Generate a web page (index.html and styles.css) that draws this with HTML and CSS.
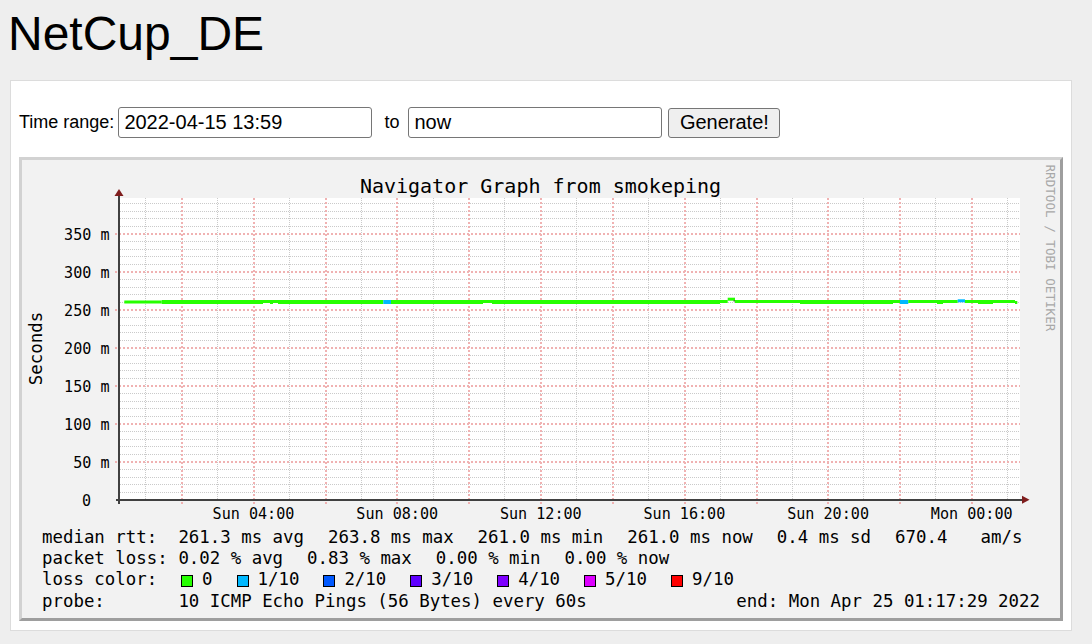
FILE: index.html
```html
<!DOCTYPE html>
<html lang="en">
<head>
<meta charset="utf-8">
<title>NetCup_DE</title>
<link rel="stylesheet" href="styles.css">
</head>
<body>
<h1 class="title">NetCup_DE</h1>
<div class="panel">
  <form class="range">
    <label class="range-label" for="start">Time range:</label>
    <input class="range-input" id="start" type="text" value="2022-04-15 13:59">
    <span class="range-to">to</span>
    <input class="range-input range-input-end" id="end" type="text" value="now">
    <button class="range-btn" type="button">Generate!</button>
  </form>
  <div class="graph">
    <svg class="graph-svg" width="1038" height="458" viewBox="3 3 1038 458" xmlns="http://www.w3.org/2000/svg">
      <rect class="g-back" x="0" y="0" width="1044" height="464"/>
      <rect class="g-canvas" x="101" y="41" width="900" height="301"/>
      <g class="g-grid">
        <path class="g-minor" d="M101 335.5H1001M101 327.5H1001M101 320.5H1001M101 312.5H1001M101 297.5H1001M101 289.5H1001M101 282.5H1001M101 274.5H1001M101 259.5H1001M101 251.5H1001M101 244.5H1001M101 236.5H1001M101 221.5H1001M101 213.5H1001M101 206.5H1001M101 198.5H1001M101 183.5H1001M101 175.5H1001M101 168.5H1001M101 160.5H1001M101 145.5H1001M101 137.5H1001M101 130.5H1001M101 122.5H1001M101 107.5H1001M101 99.5H1001M101 92.5H1001M101 84.5H1001M101 69.5H1001M101 61.5H1001M101 54.5H1001M101 46.5H1001"/>
        <path class="g-minor" d="M126.5 41V342M198.5 41V342M270.5 41V342M342.5 41V342M414.5 41V342M485.5 41V342M557.5 41V342M629.5 41V342M701.5 41V342M773.5 41V342M844.5 41V342M916.5 41V342M988.5 41V342"/>
        <path class="g-major" d="M96 305H1001M96 267H1001M96 229H1001M96 191H1001M96 153H1001M96 115H1001M96 77H1001"/>
        <path class="g-major" d="M163 41V347M235 41V347M307 41V347M378 41V347M450 41V347M522 41V347M594 41V347M666 41V347M738 41V347M809 41V347M881 41V347M953 41V347"/>
      </g>
      <g class="g-data">
        <rect class="g-c0" x="105.3" y="143.5" width="37.4" height="3"/>
        <rect class="g-c0" x="142.7" y="143" width="101.3" height="4"/>
        <rect class="g-c0" x="244" y="143" width="7" height="3"/>
        <rect class="g-c0" x="251" y="143" width="3" height="4"/>
        <rect class="g-c0" x="254" y="143" width="5" height="3"/>
        <rect class="g-c0" x="259" y="143" width="105.3" height="4"/>
        <rect class="g-c1" x="364.3" y="143" width="7.7" height="4"/>
        <rect class="g-c0" x="372" y="143" width="92" height="4"/>
        <rect class="g-c0" x="464" y="143" width="9" height="3"/>
        <rect class="g-c0" x="473" y="143" width="228" height="4"/>
        <rect class="g-c0" x="701" y="143" width="7.7" height="3"/>
        <rect class="g-c0" x="708.7" y="140.7" width="7.3" height="3"/>
        <rect class="g-dark" x="714.5" y="143.3" width="1.5" height="1.2"/>
        <rect class="g-c0" x="716" y="143" width="65" height="3"/>
        <rect class="g-c0" x="781" y="143" width="93" height="4"/>
        <rect class="g-c0" x="874" y="143" width="7" height="3"/>
        <rect class="g-c1" x="881" y="143" width="8.3" height="4"/>
        <rect class="g-c0" x="889.3" y="143" width="28.7" height="3"/>
        <rect class="g-c0" x="918" y="143" width="6" height="4"/>
        <rect class="g-c0" x="924" y="143" width="14.7" height="3"/>
        <rect class="g-c1" x="938.7" y="142.3" width="7.3" height="3"/>
        <rect class="g-c0" x="946" y="143" width="13" height="3"/>
        <rect class="g-c0" x="959" y="143" width="15" height="4"/>
        <rect class="g-c0" x="974" y="143" width="22" height="3"/>
        <rect class="g-c0" x="996" y="144" width="2.3" height="3"/>
      </g>
      <rect class="g-axis-line" x="99" y="38.5" width="2" height="308.5"/>
      <rect class="g-axis-line" x="97" y="342" width="906" height="2"/>
      <polygon class="g-arrow" points="95.5,39 104.5,39 100,32"/>
      <polygon class="g-arrow" points="1003,338.8 1003,346.8 1010.5,342.8"/>

      <text class="g-title" x="521.5" y="36.3" text-anchor="middle">Navigator Graph from smokeping</text>

      <g class="g-axis">
        <text x="90.5" y="82.5" text-anchor="end">350 m</text>
        <text x="90.5" y="120.5" text-anchor="end">300 m</text>
        <text x="90.5" y="158.5" text-anchor="end">250 m</text>
        <text x="90.5" y="196.5" text-anchor="end">200 m</text>
        <text x="90.5" y="234.5" text-anchor="end">150 m</text>
        <text x="90.5" y="272.5" text-anchor="end">100 m</text>
        <text x="90.5" y="310.5" text-anchor="end">50 m</text>
        <text x="72.2" y="348.5" text-anchor="end">0</text>
        <text x="234.5" y="361.5" text-anchor="middle">Sun 04:00</text>
        <text x="378.2" y="361.5" text-anchor="middle">Sun 08:00</text>
        <text x="521.8" y="361.5" text-anchor="middle">Sun 12:00</text>
        <text x="665.4" y="361.5" text-anchor="middle">Sun 16:00</text>
        <text x="809.1" y="361.5" text-anchor="middle">Sun 20:00</text>
        <text x="952.7" y="361.5" text-anchor="middle">Mon 00:00</text>
      </g>

      <text class="g-unit" transform="translate(22.5 191.5) rotate(-90)" text-anchor="middle">Seconds</text>
      <text class="g-mark" transform="translate(1026.7 7.5) rotate(90)">RRDTOOL / TOBI OETIKER</text>

      <g class="g-legend">
        <text x="23" y="385.7">median rtt:</text>
        <text x="159.4" y="385.7">261.3 ms avg</text>
        <text x="309" y="385.7">263.8 ms max</text>
        <text x="458.6" y="385.7">261.0 ms min</text>
        <text x="608.2" y="385.7">261.0 ms now</text>
        <text x="757.8" y="385.7">0.4 ms sd</text>
        <text x="876" y="385.7">670.4</text>
        <text x="961.5" y="385.7">am/s</text>

        <text x="23" y="407">packet loss:</text>
        <text x="159.4" y="407">0.02 % avg</text>
        <text x="288.1" y="407">0.83 % max</text>
        <text x="416.8" y="407">0.00 % min</text>
        <text x="545.5" y="407">0.00 % now</text>

        <text x="23" y="428.3">loss color:</text>
        <rect class="g-box g-c0" x="162.5" y="418.5" width="11" height="11"/>
        <text x="183" y="428.3">0</text>
        <rect class="g-box g-c1" x="218" y="418.5" width="11" height="11"/>
        <text x="238.5" y="428.3">1/10</text>
        <rect class="g-box g-c2" x="304.9" y="418.5" width="11" height="11"/>
        <text x="325.4" y="428.3">2/10</text>
        <rect class="g-box g-c3" x="391.8" y="418.5" width="11" height="11"/>
        <text x="412.3" y="428.3">3/10</text>
        <rect class="g-box g-c4" x="478.7" y="418.5" width="11" height="11"/>
        <text x="499.2" y="428.3">4/10</text>
        <rect class="g-box g-c5" x="565.6" y="418.5" width="11" height="11"/>
        <text x="586.1" y="428.3">5/10</text>
        <rect class="g-box g-c9" x="652.5" y="418.5" width="11" height="11"/>
        <text x="673" y="428.3">9/10</text>

        <text x="23" y="449.6">probe:</text>
        <text x="159.4" y="449.6">10 ICMP Echo Pings (56 Bytes) every 60s</text>
        <text x="1021" y="449.6" text-anchor="end">end: Mon Apr 25 01:17:29 2022</text>
      </g>
    </svg>
  </div>
</div>
</body>
</html>
```

FILE: styles.css
```css
html, body {
  margin: 0;
}

body {
  background: #eeeeee;
  color: #000;
  font-family: "Liberation Sans", Arial, sans-serif;
  padding: 6px 20px 0 10px;
}

.title {
  font-size: 48px;
  font-weight: normal;
  line-height: 55px;
  margin: 0 0 19px -2px;
}

.panel {
  background: #ffffff;
  border: 1px solid #dcdcdc;
  padding: 26px 8px 9px;
}

.range {
  display: flex;
  align-items: center;
  height: 31px;
  margin: 0 0 19px;
  font-size: 18px;
}

.range-label {
  margin-right: 4px;
}

.range-input {
  box-sizing: border-box;
  width: 254px;
  height: 31px;
  margin: 0;
  padding: 0 5px;
  border: 1px solid #767676;
  border-radius: 3px;
  background: #fff;
  color: #000;
  font-family: "Liberation Sans", Arial, sans-serif;
  font-size: 20px;
}

.range-to {
  margin: 0 9px 0 12px;
}

.range-btn {
  box-sizing: border-box;
  width: 112px;
  height: 30px;
  margin: 0 0 0 6px;
  padding: 0;
  border: 1px solid #767676;
  border-radius: 3px;
  background: #efefef;
  color: #000;
  font-family: "Liberation Sans", Arial, sans-serif;
  font-size: 20px;
}

.graph {
  width: 1038px;
  height: 458px;
  border-style: solid;
  border-width: 3px;
  border-color: #d2d2d2 #9e9e9e #9e9e9e #d2d2d2;
}

.graph-svg {
  display: block;
}

.g-back {
  fill: #f2f2f2;
}

.g-canvas {
  fill: #ffffff;
}

.g-grid path {
  fill: none;
}

.g-minor {
  stroke: #cacaca;
  stroke-width: 1;
  stroke-dasharray: 1 1;
  shape-rendering: crispEdges;
}

.g-major {
  stroke: #f0b2b2;
  stroke-width: 2;
  stroke-dasharray: 2 2;
  shape-rendering: crispEdges;
}

.g-c0 { fill: #26ff00; }
.g-c1 { fill: #00b8ff; }
.g-c2 { fill: #0059ff; }
.g-c3 { fill: #5e00ff; }
.g-c4 { fill: #7e00ff; }
.g-c5 { fill: #dd00ff; }
.g-c9 { fill: #ff0000; }
.g-dark { fill: #2a5a20; }

.g-box {
  stroke: #000;
  stroke-width: 1;
  shape-rendering: crispEdges;
}

.g-axis-line {
  fill: #404040;
}

.g-arrow {
  fill: #7f1d1d;
}

.g-title {
  font-family: "DejaVu Sans Mono", monospace;
  font-size: 20px;
  fill: #000;
}

.g-axis text {
  font-family: "DejaVu Sans Mono", monospace;
  font-size: 15.1px;
  fill: #000;
}

.g-unit {
  font-family: "DejaVu Sans Mono", monospace;
  font-size: 17.4px;
  fill: #000;
}

.g-mark {
  font-family: "DejaVu Sans Mono", monospace;
  font-size: 12.6px;
  fill: #a8a8a8;
}

.g-legend text {
  font-family: "DejaVu Sans Mono", monospace;
  font-size: 17.4px;
  fill: #000;
  white-space: pre;
}
```
